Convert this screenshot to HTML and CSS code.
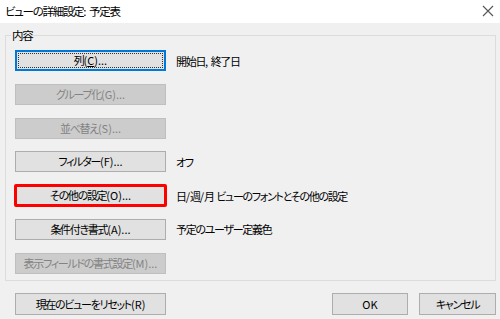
FILE: index.html
```html
<!DOCTYPE html>
<html lang="ja">
<head>
<meta charset="utf-8">
<link rel="stylesheet" href="styles.css">
</head>
<body>
<div class="dialog">
  <div class="titlebar">
    <span class="title">ビューの詳細設定<span class="a">: </span>予定表</span>
    <svg class="close" width="12" height="12" viewBox="0 0 12 12"><path d="M1 1L11 11M11 1L1 11" stroke="#555" stroke-width="1.1" fill="none"/></svg>
  </div>
  <div class="content">
    <fieldset class="group">
      <legend>内容</legend>
      <div class="rows">
        <div class="row"><button class="btn default"><span class="focus">列<span class="a">(<u>C</u>)...</span></span></button><span class="desc">開始日<span class="a">, </span>終了日</span></div>
        <div class="row"><button class="btn disabled">グループ化<span class="a">(G)...</span></button></div>
        <div class="row"><button class="btn disabled">並べ替え<span class="a">(S)...</span></button></div>
        <div class="row"><button class="btn">フィルター<span class="a">(F)...</span></button><span class="desc">オフ</span></div>
        <div class="row"><button class="btn marked">その他の設定<span class="a">(O)...</span></button><span class="desc">日<span class="a">/</span>週<span class="a">/</span>月<span class="a"> </span>ビューのフォントとその他の設定</span></div>
        <div class="row"><button class="btn">条件付き書式<span class="a">(A)...</span></button><span class="desc">予定のユーザー定義色</span></div>
        <div class="row"><button class="btn disabled">表示フィールドの書式設定<span class="a">(M)...</span></button></div>
      </div>
    </fieldset>
    <div class="footer">
      <button class="btn reset">現在のビューをリセット<span class="a">(R)</span></button>
      <div class="spacer"></div>
      <button class="btn ok"><span class="a">OK</span></button>
      <button class="btn cancel">キャンセル</button>
    </div>
  </div>
</div>
</body>
</html>
```
FILE: styles.css
```css
* { box-sizing: border-box; }
html, body { margin: 0; padding: 0; }
body {
  width: 500px;
  height: 319px;
  background: #f0f0f0;
  font-family: "Noto Sans CJK JP", "Noto Sans", sans-serif;
  font-size: 11px;
  letter-spacing: -1.3px;
  font-feature-settings: "palt";
  color: #000;
  overflow: hidden;
}
.a { letter-spacing: 0; }
.dialog { width: 500px; height: 319px; }
.titlebar {
  height: 23px;
  background: #fff;
  display: flex;
  align-items: center;
  justify-content: space-between;
  padding: 0 6px 1px 5px;
}
.title { font-size: 11.5px; line-height: 14px; }
.close { display: block; }
.content { padding: 5px 4px 0 5px; }
.group {
  margin: 0;
  padding: 0 0 0 9px;
  border: 1px solid #dcdcdc;
  height: 253px;
  width: 491px;
}
.group legend {
  padding: 0 1px;
  margin-left: -4px;
  line-height: 14px;
  font-size: 11.5px;
}
.rows {
  display: flex;
  flex-direction: column;
  gap: 12.8px;
  padding-top: 8px;
}
.row {
  display: flex;
  align-items: center;
  height: 21px;
}
.btn {
  font-family: inherit;
  font-size: 11px;
  letter-spacing: -1.3px;
  font-feature-settings: "palt";
  width: 151px;
  height: 21px;
  background: #e1e1e1;
  border: 1px solid #adadad;
  color: #000;
  padding: 0;
  margin: 0;
  line-height: 19px;
  text-align: center;
  white-space: nowrap;
}
.btn.default {
  border: 2px solid #0078d7;
  padding: 1px;
}
.btn.default .focus {
  display: block;
  height: 100%;
  border: 1px dotted #333;
  line-height: 13px;
}
.btn.disabled {
  background: #cccccc;
  border-color: #bfbfbf;
  color: #838383;
}
.btn.marked {
  outline: 3px solid #ff0000;
  outline-offset: -2px;
  border-radius: 1px;
}
.desc { margin-left: 10px; line-height: 14px; white-space: nowrap; }
.footer {
  display: flex;
  margin-top: 12px;
  padding-left: 10px;
}
.footer .btn { height: 22px; line-height: 20px; }
.spacer { flex: 1; }
.ok { width: 76px; }
.cancel { width: 77px; margin-left: 11px; }
```
